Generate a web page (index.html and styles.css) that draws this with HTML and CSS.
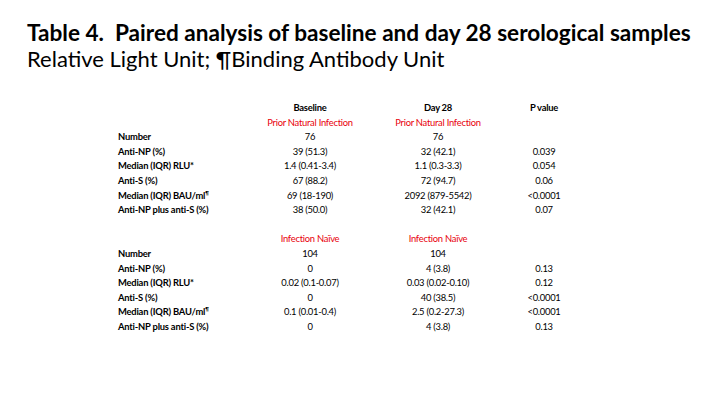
FILE: index.html
```html
<!DOCTYPE html>
<html>
<head>
<meta charset="utf-8">
<link rel="stylesheet" href="styles.css">
</head>
<body>
<div class="slide">
  <h1 class="title">Table 4.&nbsp; Paired analysis of baseline and day 28 serological samples</h1>
  <p class="subtitle">Relative Light Unit; ¶Binding Antibody Unit</p>
  <div class="table">
    <div class="lbl"></div><div class="hd">Baseline</div><div class="hd">Day 28</div><div class="hd">P value</div>
    <div class="lbl"></div><div class="grp">Prior Natural Infection</div><div class="grp">Prior Natural Infection</div><div></div>
    <div class="lbl">Number</div><div>76</div><div>76</div><div></div>
    <div class="lbl">Anti-NP (%)</div><div>39 (51.3)</div><div>32 (42.1)</div><div>0.039</div>
    <div class="lbl">Median (IQR) RLU*</div><div>1.4 (0.41-3.4)</div><div>1.1 (0.3-3.3)</div><div>0.054</div>
    <div class="lbl">Anti-S (%)</div><div>67 (88.2)</div><div>72 (94.7)</div><div>0.06</div>
    <div class="lbl">Median (IQR) BAU/ml<sup>¶</sup></div><div>69 (18-190)</div><div>2092 (879-5542)</div><div>&lt;0.0001</div>
    <div class="lbl">Anti-NP plus anti-S (%)</div><div>38 (50.0)</div><div>32 (42.1)</div><div>0.07</div>
    <div class="lbl spacer"></div><div></div><div></div><div></div>
    <div class="lbl"></div><div class="grp">Infection Naïve</div><div class="grp">Infection Naïve</div><div></div>
    <div class="lbl">Number</div><div>104</div><div>104</div><div></div>
    <div class="lbl">Anti-NP (%)</div><div>0</div><div>4 (3.8)</div><div>0.13</div>
    <div class="lbl">Median (IQR) RLU*</div><div>0.02 (0.1-0.07)</div><div>0.03 (0.02-0.10)</div><div>0.12</div>
    <div class="lbl">Anti-S (%)</div><div>0</div><div>40 (38.5)</div><div>&lt;0.0001</div>
    <div class="lbl">Median (IQR) BAU/ml<sup>¶</sup></div><div>0.1 (0.01-0.4)</div><div>2.5 (0.2-27.3)</div><div>&lt;0.0001</div>
    <div class="lbl">Anti-NP plus anti-S (%)</div><div>0</div><div>4 (3.8)</div><div>0.13</div>
  </div>
</div>
</body>
</html>
```
FILE: styles.css
```css
html, body {
  margin: 0;
  padding: 0;
  background: #ffffff;
}
.slide {
  width: 720px;
  height: 405px;
  box-sizing: border-box;
  padding: 19px 0 0 27px;
  font-family: Lato, "Open Sans", sans-serif;
  color: #000000;
}
.title {
  margin: 0;
  font-size: 22.6px;
  font-weight: 700;
  line-height: 28px;
  white-space: nowrap;
}
.subtitle {
  margin: 0;
  font-size: 22px;
  font-weight: 400;
  line-height: 24px;
  white-space: nowrap;
}
.table {
  margin: 30px 0 0 91px;
  display: grid;
  grid-template-columns: 132px 120px 136px 76px;
  grid-auto-rows: 14.6px;
  font-size: 9.4px;
  line-height: 14.6px;
  text-align: center;
  letter-spacing: -0.25px;
}
.table .lbl {
  text-align: left;
  font-weight: 700;
  white-space: nowrap;
  letter-spacing: -0.2px;
}
.table .hd {
  font-weight: 700;
}
.table .grp {
  color: #e8000b;
  white-space: nowrap;
}
.table sup {
  font-size: 5px;
  line-height: 0;
  vertical-align: 4px;
}
.spacer {
  height: 14.6px;
}
```
